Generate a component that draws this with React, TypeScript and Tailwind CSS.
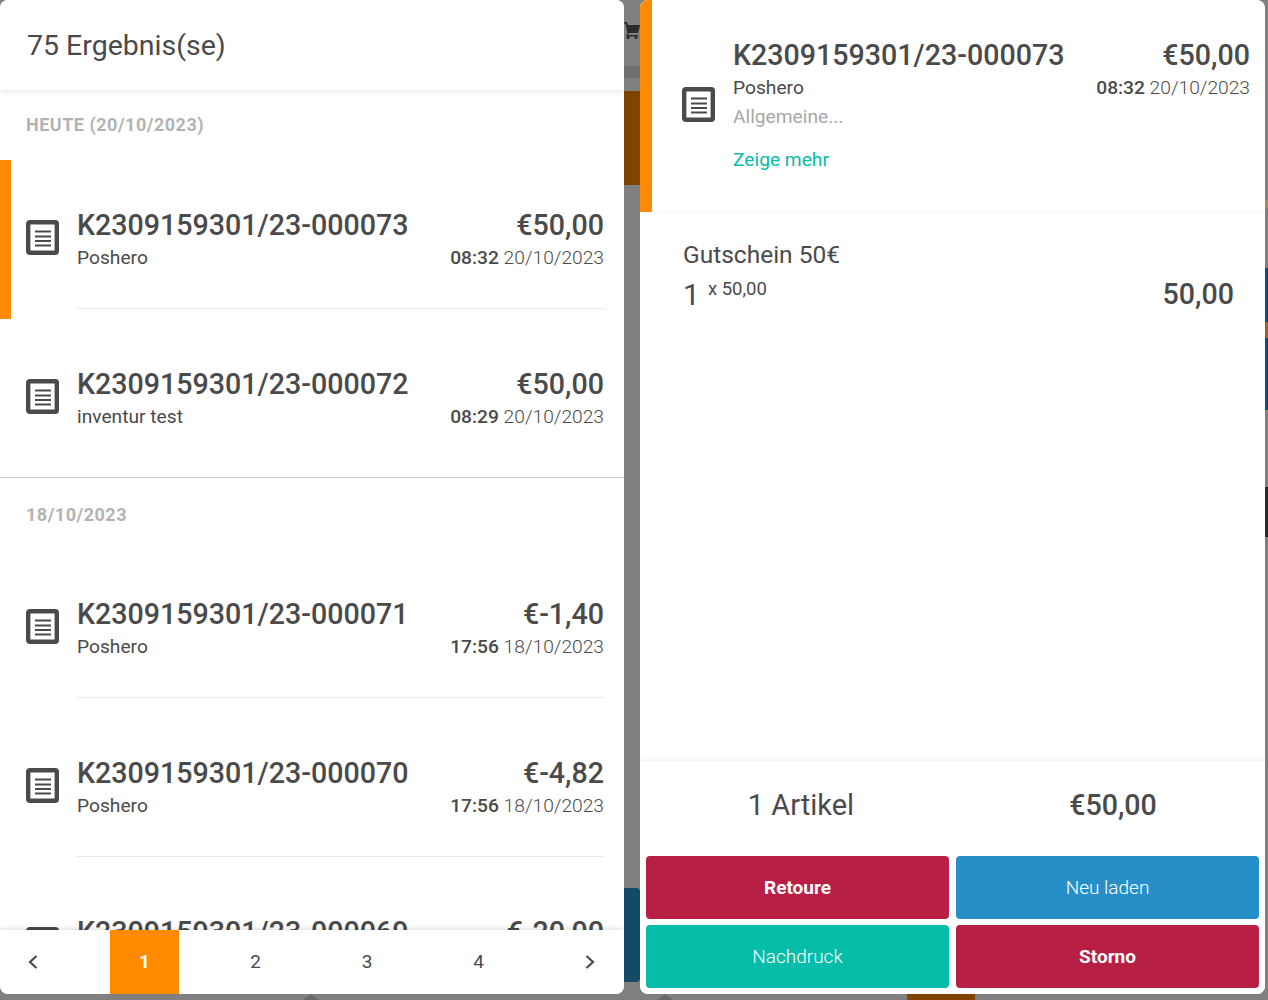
const receipts = [
  { group: "HEUTE (20/10/2023)", items: [
    { no: "K2309159301/23-000073", who: "Poshero", price: "€50,00", time: "08:32", date: "20/10/2023", active: true },
    { no: "K2309159301/23-000072", who: "inventur test", price: "€50,00", time: "08:29", date: "20/10/2023" },
  ] },
  { group: "18/10/2023", items: [
    { no: "K2309159301/23-000071", who: "Poshero", price: "€-1,40", time: "17:56", date: "18/10/2023" },
    { no: "K2309159301/23-000070", who: "Poshero", price: "€-4,82", time: "17:56", date: "18/10/2023" },
    { no: "K2309159301/23-000069", who: "Poshero", price: "€-20,00", time: "17:56", date: "18/10/2023" },
  ] },
];

function ReceiptIcon() {
  return (
    <svg width="33" height="35" viewBox="0 0 33 35" className="shrink-0">
      <rect x="2.2" y="2.2" width="28.6" height="30.6" rx="1.5" fill="#fff" stroke="#4a4a4a" strokeWidth="4.4" />
      <path d="M9 11.500h16M9 16.500h16M9 21h16M9 25.500h16" stroke="#4a4a4a" strokeWidth="2" />
    </svg>
  );
}

function Chevron({ flip }: { flip?: boolean }) {
  return (
    <svg width="10" height="14" viewBox="0 0 10 14" fill="none" stroke="#4a4a4a" strokeWidth="2.2">
      <path d={flip ? "M1.500 1l6.500 6-6.500 6" : "M8.500 1L2 7l6.500 6"} />
    </svg>
  );
}

function Backdrop() {
  return (
    <div className="absolute inset-0 overflow-hidden bg-[#808080]">
      <div className="absolute left-[624px] top-[66px] w-4 h-3 bg-[#6f6f6f]" />
      <div className="absolute left-[624px] top-[91px] w-4 h-[94px] bg-[#7f4500]" />
      <div className="absolute left-[624px] top-[888px] w-4 h-[94px] rounded-r bg-[#134a66]" />
      <svg className="absolute left-[622px] top-[20px]" width="18" height="20" viewBox="0 0 18 20" fill="#2b2b2b">
        <path d="M2 2h3l1 3h12l-2 8H7l-1 2h10v1.500H4l1.500-3.500L3.500 3.500H2z" />
        <circle cx="6" cy="17.500" r="1.500" />
        <circle cx="14" cy="17.500" r="1.500" />
      </svg>
      <div className="absolute left-[1265px] top-[200px] w-[3px] h-2 bg-[#a58a55]" />
      <div className="absolute left-[1265px] top-[268px] w-[3px] h-[142px] bg-[#0e4a8a]" />
      <div className="absolute left-[1265px] top-[322px] w-[3px] h-4 bg-[#a8601c]" />
      <div className="absolute left-[1265px] top-[487px] w-[3px] h-[50px] bg-[#2a2a2a]" />
      <div className="absolute left-[907px] top-[994px] w-[68px] h-[6px] bg-[#7f4500]" />
      <div className="absolute left-[303px] top-[994px] h-0 w-0 border-x-[8px] border-b-[6px] border-x-transparent border-b-[#6a6a6a]" />
      <div className="absolute left-[657px] top-[994px] h-0 w-0 border-x-[8px] border-b-[6px] border-x-transparent border-b-[#6a6a6a]" />
    </div>
  );
}

function ListRow({ item, last }: { item: (typeof receipts)[0]["items"][0]; last: boolean }) {
  return (
    <div className={`relative h-[159px] shrink-0 pl-[26px] pr-5 ${last ? "border-b border-[#c8c8c8]" : ""}`}>
      {item.active && <div className="absolute left-0 top-0 h-full w-[11px] bg-[#ff8a00]" />}
      <div className="flex h-full items-center gap-[18px]">
        <div className="mb-[4px]">
          <ReceiptIcon />
        </div>
        <div className="flex h-full flex-1 flex-col pt-[47px]">
          <div className="flex items-baseline justify-between text-[28.6px] leading-[36px] font-medium">
            <span>{item.no}</span>
            <span>{item.price}</span>
          </div>
          <div className="mt-[3px] flex items-baseline justify-between text-[19.2px] leading-[24px]">
            <span>{item.who}</span>
            <span className="font-light">
              <span className="font-medium">{item.time}</span> {item.date}
            </span>
          </div>
        </div>
      </div>
      {!last && <div className="absolute bottom-[10px] left-[77px] right-5 h-px bg-[#e8e8e8]" />}
    </div>
  );
}

function ResultsPanel() {
  return (
    <div className="flex h-[994px] w-[624px] flex-col overflow-hidden rounded-lg bg-white">
      <div className="relative z-10 flex h-[90px] shrink-0 items-center bg-white pl-[27px] pt-[2px] text-[28.5px] shadow-[0_1px_6px_rgba(0,0,0,0.12)]">
        75 Ergebnis(se)
      </div>
      <div className="flex-1 overflow-hidden">
        {receipts.map((g, gi) => (
          <div key={g.group}>
            <div
              className={`flex items-center pl-[26px] text-[18px] font-bold tracking-[0.5px] text-[#b3b3b3] ${
                gi === 0 ? "h-[70px] pb-[2px]" : "h-[71px] pt-[1px]"
              }`}
            >
              {g.group}
            </div>
            {g.items.map((item, i) => (
              <ListRow key={item.no} item={item} last={gi === 0 && i === g.items.length - 1} />
            ))}
          </div>
        ))}
      </div>
      <div className="relative z-10 flex h-16 shrink-0 items-center bg-white text-[19px] shadow-[0_-1px_5px_rgba(0,0,0,0.15)]">
        <div className="flex w-[110px] items-center pl-[28px]">
          <Chevron />
        </div>
        <div className="flex h-full w-[69px] items-center justify-center bg-[#ff8a00] font-bold text-white">1</div>
        <div className="flex h-full w-[153px] items-center justify-center">2</div>
        <div className="flex h-full w-[70px] items-center justify-center">3</div>
        <div className="flex h-full w-[153px] items-center justify-center">4</div>
        <div className="flex flex-1 items-center justify-end pr-[29px]">
          <Chevron flip />
        </div>
      </div>
    </div>
  );
}

function ActionButton({ label, color, bold }: { label: string; color: string; bold?: boolean }) {
  return (
    <button className={`h-[63px] rounded pt-[1px] text-[19px] text-white ${color} ${bold ? "font-bold" : "font-light"}`}>
      {label}
    </button>
  );
}

function DetailPanel() {
  return (
    <div className="flex h-[994px] w-[625px] flex-col overflow-hidden rounded-lg bg-white">
      <div className="flex h-[212px] shrink-0">
        <div className="w-3 shrink-0 bg-[#ff8a00]" />
        <div className="flex flex-1 items-center border-b border-[#f6f6f6] pl-[30px] pr-[15px]">
          <div className="mb-[3px]">
            <ReceiptIcon />
          </div>
          <div className="ml-[18px] flex-1 self-start pt-[37px]">
            <div className="flex items-baseline justify-between text-[28.6px] leading-[36px] font-medium">
              <span>K2309159301/23-000073</span>
              <span>€50,00</span>
            </div>
            <div className="mt-[1px] flex items-baseline justify-between text-[19.2px] leading-[28px]">
              <span>Poshero</span>
              <span className="font-light">
                <span className="font-medium">08:32</span> 20/10/2023
              </span>
            </div>
            <div className="text-[19.2px] leading-[30px] text-[#a8a8a8]">Allgemeine...</div>
            <div className="mt-[13px] text-[19.2px] leading-[30px] text-[#05bda8]">Zeige mehr</div>
          </div>
        </div>
      </div>
      <div className="flex-1 pl-[43px] pr-[31px] pt-[27px]">
        <div className="text-[24.5px] leading-[32px]">Gutschein 50€</div>
        <div className="mt-[4px] flex items-start">
          <span className="text-[30px] leading-[40px]">1</span>
          <span className="ml-[8px] text-[18.5px] leading-[28px]">x 50,00</span>
          <span className="ml-auto -mt-[1px] text-[28.6px] leading-[40px] font-medium">50,00</span>
        </div>
      </div>
      <div className="relative shrink-0 bg-white px-[6px] pb-[6px] shadow-[0_-1px_6px_rgba(0,0,0,0.08)]">
        <div className="flex h-[95px] items-center pb-[6px]">
          <span className="w-[310px] text-center text-[29px]">1 Artikel</span>
          <span className="flex-1 pl-[11px] text-center text-[28.6px] font-medium">€50,00</span>
        </div>
        <div className="grid grid-cols-2 gap-x-[7px] gap-y-[6px]">
          <ActionButton label="Retoure" color="bg-[#b71f45]" bold />
          <ActionButton label="Neu laden" color="bg-[#268fc7]" />
          <ActionButton label="Nachdruck" color="bg-[#05bda8]" />
          <ActionButton label="Storno" color="bg-[#b71f45]" bold />
        </div>
      </div>
    </div>
  );
}

export default function App() {
  return (
    <div className="relative h-[1000px] w-[1268px] overflow-hidden font-['Roboto',sans-serif] text-[#4a4a4a]">
      <Backdrop />
      <div className="relative flex gap-4">
        <ResultsPanel />
        <DetailPanel />
      </div>
    </div>
  );
}
